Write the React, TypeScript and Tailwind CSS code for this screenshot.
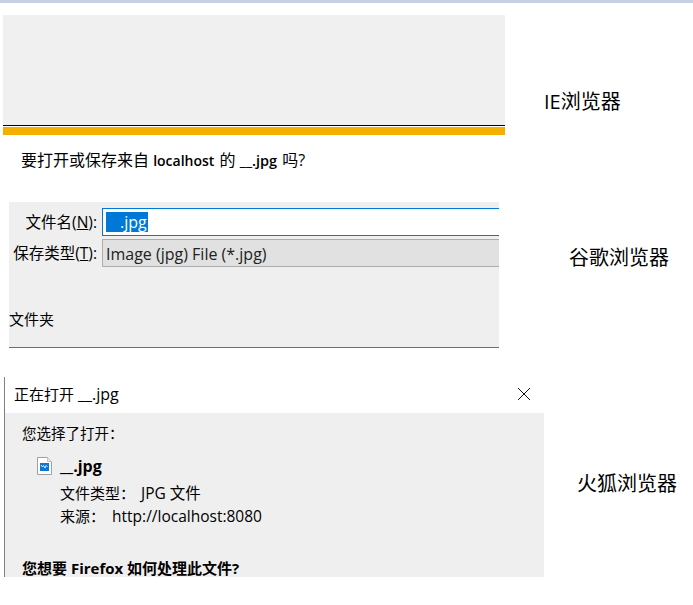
const sans = "font-['Open_Sans','Noto_Sans_CJK_SC',sans-serif]"

function SideLabel({ text, className }: { text: string; className: string }) {
  return <div className={`text-[20px] leading-[28px] text-black whitespace-nowrap ${className}`}>{text}</div>
}

function FileIcon() {
  return (
    <svg width="15" height="18" viewBox="0 0 15 18" className="shrink-0">
      <path d="M0.5 0.5H10.5L14.5 4.5V17.5H0.5Z" fill="#fff" stroke="#a0a0a0" />
      <path d="M10.5 0.5V4.5H14.5" fill="#e8e8e8" stroke="#c4c4c4" />
      <rect x="3" y="6" width="9" height="8" fill="#0a78d8" />
      <path d="M4 8L5.5 10L6.5 8.5L8 11L9 8.5L10.5 9.5" fill="none" stroke="#d8ecfb" strokeWidth="1" />
    </svg>
  )
}

export default function App() {
  return (
    <div className={`w-[693px] h-[605px] bg-white overflow-hidden text-black ${sans}`}>
      <div className="h-[3px] bg-[#c5d0e2]" />

      {/* IE */}
      <div className="flex mt-[12px] h-[187px]">
        <div className="ml-[3px] w-[502px]">
          <div className="h-[110px] bg-[#f0f0f0]" />
          <div className="h-px bg-black" />
          <div className="h-px bg-white" />
          <div className="h-[8px] bg-[#f4b000]" />
          <div className="mt-[15px] ml-[18px] text-[16px] leading-[20px] whitespace-nowrap">
            要打开或保存来自 <b className="text-[14px] font-semibold">localhost</b> <span className="ml-px">的</span> <b className="text-[14.5px] font-semibold">__.jpg</b> <span className="ml-px">吗?</span>
          </div>
        </div>
        <SideLabel text="IE浏览器" className="ml-[39px] mt-[73px]" />
      </div>

      {/* Chrome */}
      <div className="flex h-[175px]">
        <div className="ml-[9px] w-[490px] h-[146px] bg-[#efefef] border-b border-[#6e6e6e]">
          <div className="flex items-center pt-[6px]">
            <div className="w-[93px] pr-[5px] pt-[1px] text-right text-[15.5px] whitespace-nowrap">
              文件名(<span className="underline">N</span>):
            </div>
            <div className="flex-1 h-[28px] bg-white border border-r-0 border-[#0078d7] flex items-center pl-[3px]">
              <span className="bg-[#0078d7] text-white text-[16px] leading-[20px] pl-[14px] pr-px">.jpg</span>
            </div>
          </div>
          <div className="flex items-center mt-[3px]">
            <div className="w-[93px] pr-[5px] pt-[1px] text-right text-[15.5px] whitespace-nowrap">
              保存类型(<span className="underline">T</span>):
            </div>
            <div className="flex-1 h-[28px] bg-[#e1e1e1] border border-r-0 border-[#adadad] flex items-center pl-[3px] pt-[1px] text-[16px] text-[#222]">
              Image (jpg) File (*.jpg)
            </div>
          </div>
          <div className="mt-[42px] text-[15px] leading-[20px]">文件夹</div>
        </div>
        <SideLabel text="谷歌浏览器" className="ml-[70px] mt-[42px]" />
      </div>

      {/* Firefox */}
      <div className="flex">
        <div className="ml-[4px] w-[540px] h-[200px] border-l border-[#808080] flex flex-col">
          <div className="h-[36px] flex items-center justify-between pl-[9px] pr-[13px] pb-[2px] text-[15px]">
            <span>正在打开 <span className="text-[16px]">__.jpg</span></span>
            <svg width="14" height="14" viewBox="0 0 14 14">
              <path d="M1 1L13 13M13 1L1 13" stroke="#111" strokeWidth="1" fill="none" />
            </svg>
          </div>
          <div className="flex-1 bg-[#efefef] pl-[17px] overflow-hidden">
            <div className="mt-[11px] text-[14.5px] leading-[20px]">您选择了打开：</div>
            <div className="flex items-center gap-[8px] mt-[11px] ml-[15px] h-[22px]">
              <FileIcon />
              <span className="text-[16px] font-bold">__.jpg</span>
            </div>
            <div className="ml-[38px] mt-[5px] text-[15px] leading-[23px]">
              <div>文件类型：<span className="ml-[6px] text-[15.5px]">JPG 文件</span></div>
              <div>来源：<span className="ml-[7px] text-[15.5px]">http://localhost:8080</span></div>
            </div>
            <div className="mt-[31px] text-[15px] leading-[18px] font-bold whitespace-nowrap">您想要 Firefox 如何处理此文件?</div>
          </div>
        </div>
        <SideLabel text="火狐浏览器" className="ml-[33px] mt-[93px]" />
      </div>
    </div>
  )
}
